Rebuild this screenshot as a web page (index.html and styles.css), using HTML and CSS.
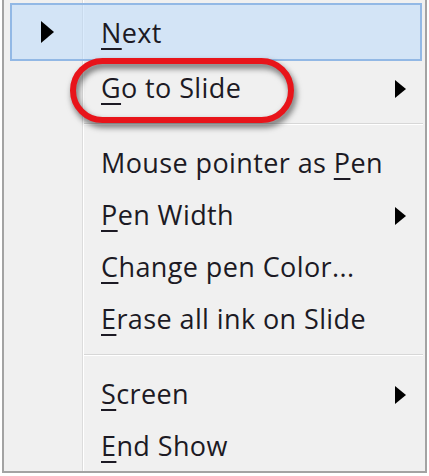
FILE: index.html
```html
<!DOCTYPE html>
<html>
<head>
<meta charset="utf-8">
<link rel="stylesheet" href="styles.css">
</head>
<body>
<div class="menu">
  <div class="item active">
    <span class="icon"><svg width="14" height="22" viewBox="0 0 14 22"><polygon points="0,0 13,11 0,22" fill="#000"/></svg></span>
    <span class="label"><u>N</u>ext</span>
  </div>
  <div class="item">
    <span class="icon"></span>
    <span class="label"><u>G</u>o to Slide</span>
    <span class="sub"><svg width="11" height="18" viewBox="0 0 11 18"><polygon points="0,0 11,9 0,18" fill="#000"/></svg></span>
  </div>
  <div class="sep"></div>
  <div class="item">
    <span class="icon"></span>
    <span class="label">Mouse pointer as <u>P</u>en</span>
  </div>
  <div class="item">
    <span class="icon"></span>
    <span class="label"><u>P</u>en Width</span>
    <span class="sub"><svg width="11" height="18" viewBox="0 0 11 18"><polygon points="0,0 11,9 0,18" fill="#000"/></svg></span>
  </div>
  <div class="item">
    <span class="icon"></span>
    <span class="label"><u>C</u>hange pen Color...</span>
  </div>
  <div class="item">
    <span class="icon"></span>
    <span class="label"><u>E</u>rase all ink on Slide</span>
  </div>
  <div class="sep"></div>
  <div class="item">
    <span class="icon"></span>
    <span class="label"><u>S</u>creen</span>
    <span class="sub"><svg width="11" height="18" viewBox="0 0 11 18"><polygon points="0,0 11,9 0,18" fill="#000"/></svg></span>
  </div>
  <div class="item">
    <span class="icon"></span>
    <span class="label"><u>E</u>nd Show</span>
  </div>
  <div class="ring"></div>
</div>
</body>
</html>
```
FILE: styles.css
```css
html, body {
  margin: 0;
  padding: 0;
  background: #ffffff;
}

.menu {
  position: relative;
  box-sizing: border-box;
  width: 425px;
  margin-left: 2px;
  padding-top: 3px;
  border-left: 2px solid #a3a3a3;
  border-right: 2px solid #a3a3a3;
  border-bottom: 2px solid #a3a3a3;
  background:
    linear-gradient(to right, transparent 78px, #dcdcdc 78px, #dcdcdc 79px, #ffffff 79px, #ffffff 80px, transparent 80px),
    #f0f0f0;
  font-family: "Open Sans", "Noto Sans", sans-serif;
  font-size: 27px;
  letter-spacing: 0.4px;
  color: #1c1a24;
}

.item {
  display: flex;
  align-items: center;
  box-sizing: border-box;
  height: 52px;
  margin: 0 3px 0 6px;
  border: 2px solid transparent;
}

.item.active {
  height: 58px;
  background: rgba(182, 216, 252, 0.5);
  border-color: #92b8e5;
}

.icon {
  display: flex;
  align-items: center;
  box-sizing: border-box;
  width: 89px;
  padding-left: 29px;
  flex: none;
}

.label {
  flex: 1;
  white-space: nowrap;
}

.label u {
  text-decoration-thickness: 2px;
  text-underline-offset: 5px;
}

.sub {
  display: flex;
  margin-right: 14px;
  margin-top: 4px;
}

.sep {
  margin: 10px 2px 11px 80px;
  border-top: 1px solid #d7d7d7;
  border-bottom: 1px solid #ffffff;
}

.ring {
  position: absolute;
  left: 66px;
  top: 58px;
  width: 224px;
  height: 65px;
  box-sizing: border-box;
  border: 6px solid #e8141a;
  border-radius: 33px;
  filter: drop-shadow(2px 4px 3px rgba(0, 0, 0, 0.6));
}
```
